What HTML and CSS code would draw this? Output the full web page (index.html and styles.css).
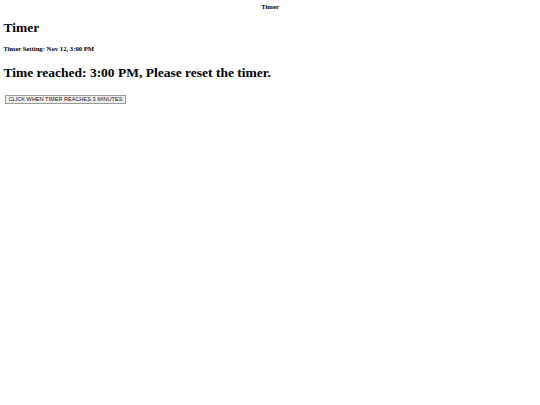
FILE: index.html
```html
<!DOCTYPE html>
<html>
<head>
<meta charset="utf-8">
<title>Timer</title>
<link rel="stylesheet" href="styles.css">
</head>
<body>
<div class="page-title">Timer</div>
<h1 class="heading">Timer</h1>
<h4 class="setting">Timer Setting: Nov 12, 3:00 PM</h4>
<h1 class="heading reached">Time reached: 3:00 PM, Please reset the timer.</h1>
<div class="actions">
<button class="btn" type="button">CLICK WHEN TIMER REACHES 3 MINUTES</button>
</div>
</body>
</html>
```

FILE: styles.css
```css
html, body {
  background: #ffffff;
}
body {
  margin: 3.4px;
  font-family: "Liberation Serif", "Times New Roman", serif;
  color: #000000;
}
.page-title {
  text-align: center;
  font-weight: bold;
  font-size: 6.7px;
  line-height: 7.7px;
}
.heading {
  font-size: 13.5px;
  line-height: 15.5px;
  margin: 9px 0;
  font-weight: bold;
}
.setting {
  font-size: 6.7px;
  line-height: 7.7px;
  margin: 9px 0;
  font-weight: bold;
}
.reached {
  margin-top: 13px;
}
.actions {
  display: flex;
  margin-top: 14.3px;
  padding-left: 1.6px;
}
.btn {
  font-family: "Liberation Sans", Arial, sans-serif;
  font-size: 5.6px;
  line-height: 6.4px;
  padding: 0 2.5px;
  margin: 0;
  background: #efefef;
  border: 0.8px solid #999999;
  border-radius: 0;
  color: #222222;
}
```
